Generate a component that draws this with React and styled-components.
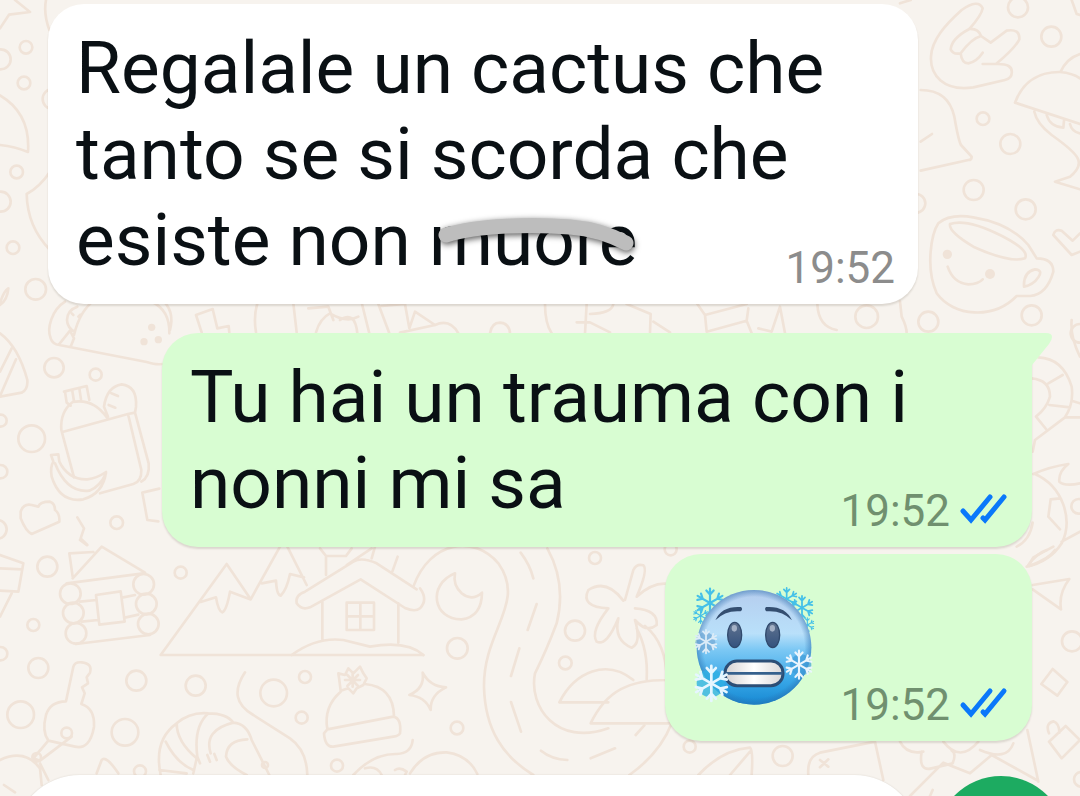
import React from 'react';
import styled, { createGlobalStyle } from 'styled-components';

const GlobalStyle = createGlobalStyle`
    * {
        box-sizing: border-box;
    }
    body {
        margin: 0;
        font-family: Roboto, 'Noto Sans', sans-serif;
        background: #f7f3ee;
    }
`;

const Screen = styled.div`
    position: relative;
    z-index: 0;
    height: 100vh;
    overflow: hidden;
    background: #f7f3ee;
`;

const WallpaperSvg = styled.svg`
    position: absolute;
    inset: 0;
    width: 100%;
    height: 100%;
    z-index: -1;
    fill: none;
    stroke: #f0e3d8;
    stroke-width: 8;
    stroke-linecap: round;
    stroke-linejoin: round;
`;

const Messages = styled.main`
    display: flex;
    flex-direction: column;
    padding: 4px 48px 0;
`;

const Bubble = styled.article`
    position: relative;
    display: ${(props) => (props.$emoji ? 'flex' : 'grid')};
    align-self: ${(props) => (props.$out ? 'flex-end' : 'flex-start')};
    max-width: calc(100% - 114px);
    margin-top: ${(props) => props.$gap || 0}px;
    border-radius: 36px;
    border-top-right-radius: ${(props) => (props.$tail ? 0 : 36)}px;
    background: ${(props) => (props.$out ? '#d8fdd2' : '#ffffff')};
    box-shadow: 0 2px 2px rgba(60, 40, 20, 0.14);
`;

const Tail = styled.svg`
    position: absolute;
    top: 0;
    left: 100%;
    width: 20px;
    height: 32px;
    fill: #d8fdd2;
`;

const Text = styled.p`
    grid-area: 1 / 1;
    margin: 0;
    padding: 21px 28px;
    font-size: 73px;
    line-height: 86px;
    color: #0a1014;
`;

const Meta = styled.div`
    grid-area: 1 / 1;
    place-self: end;
    display: flex;
    align-items: center;
    gap: 9px;
    padding: 0 23px 10px 0;
    font-size: 44px;
    line-height: 52px;
    color: ${(props) => (props.$out ? '#70906f' : '#8c8c8c')};
`;

const Ticks = styled.svg`
    width: 50px;
    height: 36px;
    fill: none;
    stroke: #0a78fa;
    stroke-width: 5;
    stroke-linecap: round;
`;

const Struck = styled.span`
    position: relative;
`;

const Stroke = styled.svg`
    position: absolute;
    top: 0;
    left: 0;
    width: 220px;
    height: 84px;
    fill: none;
    stroke: #bdbdbd;
    stroke-width: 15;
    stroke-linecap: round;
    filter: drop-shadow(1px 2px 3px rgba(0, 0, 0, 0.65));
`;

const Emoji = styled.svg`
    width: 124px;
    height: 124px;
    margin: 31px 24px 32px 27px;
`;

const Composer = styled.form`
    display: flex;
    align-items: center;
    gap: 16px;
    margin-top: 34px;
    padding: 0 14px;
`;

const MessageInput = styled.input`
    flex: 1;
    min-width: 0;
    height: 132px;
    padding: 0 66px;
    border: 0;
    border-radius: 66px;
    outline: 0;
    background: #ffffff;
    font: 54px Roboto, sans-serif;
    box-shadow: 0 0 2px rgba(60, 40, 20, 0.14);
`;

const SendButton = styled.button`
    width: 130px;
    height: 130px;
    padding: 0;
    border: 0;
    border-radius: 50%;
    background: #1dab61;
    color: #ffffff;
`;

const dots = [
    // left edge
    [78, 142, 19], [2, 178, 30], [72, 249, 19], [158, 297, 30], [50, 516, 19],
    [2, 605, 30], [39, 743, 19], [107, 868, 31], [162, 1103, 29], [287, 1124, 18],
    [2, 1262, 18], [95, 1316, 40], [2, 1415, 20], [350, 1568, 19], [-8, 1588, 28],
    // bottom left
    [142, 1700, 30], [542, 1718, 18], [100, 1875, 18], [2, 1961, 20],
    [115, 2004, 30], [409, 2042, 30], [587, 2057, 30], [821, 2079, 40],
    [915, 2031, 18], [905, 2153, 18], [62, 2144, 40], [375, 2197, 40],
    [1011, 2297, 18], [420, 2314, 18],
    // bottom middle
    [1372, 1945, 31], [1371, 2184, 19], [1785, 1674, 18], [1725, 1892, 30],
    [1696, 1989, 19], [2012, 1648, 18], [2348, 2268, 30], [2069, 2240, 18],
    // right edge
    [3054, 22, 30], [3154, 110, 30], [2949, 356, 19], [3031, 432, 30],
    [2921, 570, 30], [3077, 628, 30], [2748, 610, 28], [2785, 965, 30],
    [3095, 946, 30], [3240, 1000, 28], [3236, 1519, 22], [3216, 1924, 30],
    [2816, 1910, 19], [3244, 2338, 22],
    // between the bubbles
    [2600, 950, 34],
];

const logEnds = [
    [211, 161], [220, 219], [228, 280], [431, 133], [439, 192], [445, 252],
];

const Wallpaper = () => (
    <WallpaperSvg
        viewBox="0 0 3240 2388"
        preserveAspectRatio="xMinYMin slice"
        aria-hidden="true"
    >
        {dots.map(([x, y, r]) => (
            <circle key={`${x}-${y}`} cx={x} cy={y} r={r} />
        ))}

        {/* top left scraps */}
        <path d="M45 0L90 36L27 44L0 85M138 0Q130 40 148 90M0 286Q92 340 84 456Q45 440 0 435M150 515Q120 560 80 582Q82 680 150 750M0 910Q10 875 25 865Q22 900 0 915" />

        {/* taco, pizza, picnic bag and banana */}
        <g transform="translate(0 870)">
            <path d="M195 35C155 60 140 115 152 145Q158 163 178 165L440 216Q470 225 485 222M178 162L210 122L222 145L212 170M222 135Q240 60 285 30M232 50Q202 60 201 90Q202 115 225 125M215 70L220 75M235 80L241 74M455 35Q510 60 508 130M485 30Q525 60 510 120" />
            <path d="M0 130Q55 170 82 270Q84 300 65 308L0 320M0 245L35 175M0 318L48 208" />
            <path d="M192 305L260 288L268 330M195 305L200 338L212 347M217 303L222 334M238 295L243 328M218 336Q180 365 184 420L222 562M218 336Q280 325 320 382M190 425L384 372L424 540Q425 575 400 582L300 610M384 372L405 368L446 520Q450 560 424 575M312 350Q320 290 365 283Q412 288 408 350L405 368M312 350L324 380M334 310L354 318M326 345L346 353" />
            <path d="M153 495L175 493L178 515Q205 570 262 568Q290 565 318 546Q310 610 250 628Q180 640 155 560Q150 530 160 515ZM165 520Q200 610 268 602Q300 590 318 550" />
            <path d="M62 665Q70 640 95 645L115 650Q120 635 150 635Q165 640 165 660Q180 670 178 695L95 732Q78 725 62 685ZM232 682L252 715L242 745L262 765M478 596L427 608L442 690L475 694" />
            <path d="M588 75L638 57L652 115L686 108L688 127M588 75L605 127M772 40Q760 80 768 127M880 40L890 127M948 127Q960 85 990 70Q1040 100 1075 80M925 55L985 50L1000 90" />
            <g fill="#f0e3d8" stroke="none">
                <circle cx="455" cy="112" r="11" />
                <circle cx="432" cy="155" r="11" />
                <circle cx="475" cy="149" r="11" />
            </g>
        </g>

        {/* strip between the first two bubbles */}
        <g transform="translate(1020 870)">
            <path d="M0 90Q45 60 52 130M66 42L88 130M115 42L148 130M125 48L195 42L208 115L225 65L285 105L180 128M285 105Q330 85 355 130M450 130Q455 98 480 98Q508 100 510 130M615 42Q615 100 635 130M740 42L735 130M750 72Q815 70 820 42M710 97L750 97L810 127M860 42L932 72L930 127M940 95L990 127M1072 42L1095 75L1220 42M1095 75L1100 125L1220 92L1225 55M1220 92L1235 130M1255 115L1295 125L1320 50L1335 130M1432 42Q1435 110 1490 120" />
        </g>

        {/* crate and log cabin */}
        <g transform="translate(0 1620)">
            <path d="M0 45L70 70L55 155L0 152M0 85L66 88M35 160L0 230M240 0L260 15M208 40L280 36M208 40L218 110M218 115L305 20L435 98M200 130L430 100M240 185L290 180M245 245L295 240M288 165L362 154L374 245L298 254ZM370 172L405 165M378 232L415 224M228 312L450 285" />
            {logEnds.map(([x, y]) => (
                <circle key={`${x}-${y}`} cx={x} cy={y} r="31" />
            ))}

            {/* mountains and snowed-in house */}
            <path d="M1270 345H482L680 72L752 178L840 20M862 20L920 135M602 186L648 172Q655 215 667 217Q680 210 690 155L750 178M785 130L828 122Q830 165 842 167Q860 150 870 102L912 112" />
            <path d="M978 105V48L960 25M978 48H1038L1055 25M1040 75L1115 25M1125 20L1115 55M1193 50L1175 100M1260 145Q1285 180 1260 205Q1245 217 1215 204L1082 118L930 202Q905 212 890 190Q885 165 915 155L1060 65Q1085 50 1130 70L1250 148M967 185V298M1195 190V308M875 345Q950 290 1030 300L1110 320Q1220 300 1270 345M1040 188H1122V270H1040ZM1081 188V270M1040 229H1122" />

            {/* key, ring and shrimp */}
            <path d="M198 484L220 380Q225 365 245 367Q278 370 270 398L260 412L264 430L246 442L254 460L244 492Q285 505 282 560Q270 630 225 620L145 602Q125 575 138 525Q150 485 198 484ZM145 602L100 655L120 662L215 590" />
            <circle cx="200" cy="579" r="16" />
            <circle cx="110" cy="652" r="13" />
            <path d="M0 660Q75 625 120 685L125 735M120 670L145 720M12 735L45 757M290 700L305 660Q318 645 355 700" />
            <path d="M482 705Q460 600 530 550Q570 515 625 520Q680 520 700 548Q740 550 755 600L808 705M700 548Q610 570 632 640M625 520Q580 560 592 650L600 670M530 550Q530 605 590 655M497 605Q530 670 580 690M478 690L560 700M590 655L580 700M742 598Q680 600 678 650Q690 680 740 705M622 645L630 665M643 642L650 660" />
            <circle cx="795" cy="675" r="9" />
            <path d="M735 397Q680 480 760 525L870 595Q920 630 922 705" />

            {/* woolly hat */}
            <path d="M1022 455Q970 500 982 568L1180 530Q1205 535 1200 580Q1195 588 1180 590L1000 620Q975 622 972 580L982 568M1095 432Q1180 440 1182 528M1018 420L1015 400L1035 405L1045 385L1060 400L1080 380L1090 400L1100 415L1090 435L1070 445L1060 460L1045 445L1022 452ZM1035 420H1080M1058 400V440M1042 405L1074 438M1074 405L1042 438" />
        </g>

        {/* moon, star, road and palm island */}
        <g transform="translate(1020 1620)">
            <path d="M345 100C260 135 280 240 365 238Q425 230 426 158Q395 185 365 160Q338 135 345 100Z" />
            <path d="M248 398Q270 440 318 442Q270 465 272 510Q255 470 208 465Q255 445 248 398Z" />
            <path d="M220 140C270 0 405 -15 475 70C560 190 430 270 432 440C435 570 490 650 580 705M622 25Q680 130 650 250Q620 330 585 400C565 500 650 620 805 565M868 705Q960 640 995 550M542 38Q570 75 580 115M590 192L563 270M538 325L513 408M513 486L543 575M603 632Q635 658 682 660M752 655L825 625M887 585L913 556" />
            <path d="M855 180L880 90Q890 70 910 76Q925 90 890 170Q940 125 985 132M850 182Q800 115 745 150Q720 200 805 205M805 205Q750 275 770 305Q800 320 835 235Q820 300 875 323Q905 310 885 240Q920 280 950 255Q955 210 885 205M890 265Q925 330 920 418M915 258Q980 310 980 420M658 487H805M658 487C705 395 800 355 880 420M752 550H1000M752 550C800 450 870 420 980 420" />
            <path d="M40 705Q100 640 170 642Q215 640 218 600M210 700Q250 635 320 637Q385 645 412 702M75 685Q110 675 125 705M165 690Q180 680 200 695L195 705" />
        </g>

        {/* hand, bell, hat and smiling mug */}
        <g transform="translate(2700 0)">
            <path d="M185 30Q235 -5 248 25Q245 45 208 87Q235 85 243 108L272 128L320 92Q360 85 358 118Q345 145 288 192Q340 190 335 220Q335 235 315 240L220 262C130 275 90 225 93 170C95 120 135 75 185 30ZM208 87Q155 115 152 148Q160 165 182 160Q215 115 243 108M182 160Q185 190 205 190Q230 185 248 158M288 192H248M0 10L32 0" />
            <path d="M62 270Q145 270 163 350Q175 420 183 435L215 470Q215 480 205 480L62 512M62 425L96 402" />
            <path d="M345 308Q380 215 480 216Q520 220 540 235M345 308L540 372M482 215Q500 175 540 162M403 335Q410 370 455 405C540 465 560 490 510 530L465 545L540 568M440 345Q450 380 490 383L492 362M510 372Q515 395 540 400M515 0L530 42L540 45" />
            <path d="M115 670Q150 640 220 652Q330 670 385 735L410 775Q460 775 460 815Q440 885 390 888H350C280 960 160 950 110 880C75 800 95 700 115 670ZM150 672Q200 655 300 705Q390 750 375 775Q330 790 220 740Q145 695 150 672ZM372 860Q370 815 405 808Q430 810 415 832Q400 855 372 860ZM143 800Q160 850 205 853Q235 852 248 838" />
            <path d="M460 705Q465 685 485 692L518 722L540 700M460 705L515 765L540 755M0 905L5 950Q20 980 20 1000" />
            <g fill="#f0e3d8" stroke="none">
                <circle cx="142" cy="763" r="14" />
                <circle cx="270" cy="822" r="15" />
            </g>
        </g>

        {/* donut, fish and football beside the outgoing bubbles */}
        <g transform="translate(3030 960)">
            <path d="M85 112Q160 115 185 200Q192 250 165 292L75 360L68 395M65 175Q120 180 120 230Q110 265 78 290M115 190L158 165M118 255L180 262M78 290L108 327M165 292H210M185 242L210 250M185 0Q180 50 210 110" />
            <path d="M70 462Q120 440 175 432Q145 455 148 485Q165 500 210 490M75 462C160 500 190 600 155 670Q120 725 50 740M122 538L150 535M122 538L115 590L150 628M155 665L210 635M68 608Q60 660 20 680M70 712L130 680M70 712L55 738" />
        </g>
        <g transform="translate(2700 1650)">
            <path d="M385 45Q410 10 440 0M388 48Q450 25 465 0M398 105L508 87Q475 130 483 178L398 118M458 357L502 396L472 437L424 402ZM447 575L497 528L540 570L485 625ZM447 550Q435 520 460 514Q478 520 478 548M382 540L415 695M0 575Q20 615 70 605M65 605Q55 665 95 655L158 640Q170 610 155 602M130 575Q180 640 235 575M240 600Q320 635 340 580M30 738L130 638L210 670L275 615L410 690M90 738L98 720" />
            <path d="M-605 675Q-535 600 -450 593Q-440 600 -445 675M-510 675L-450 605M-275 675Q-280 620 -240 608L-75 575L-50 690M-240 630L-215 650M-215 628L-240 652" />
        </g>
    </WallpaperSvg>
);

const ReadTicks = () => (
    <Ticks viewBox="0 0 50 36" role="img" aria-label="Letto">
        <path d="M4 18L12 27L31 4M24 25L26 27L45 4" />
    </Ticks>
);

const Flake = ({ x, y, r, color }) => (
    <g
        transform={`translate(${x} ${y}) scale(${r / 40})`}
        stroke={color}
        strokeWidth="6"
        strokeLinecap="round"
        fill="none"
    >
        {[0, 60, 120, 180, 240, 300].map((angle) => (
            <path
                key={angle}
                transform={`rotate(${angle})`}
                d="M0 0V-39M-10 -34L0 -23L10 -34"
            />
        ))}
    </g>
);

const FreezingFace = () => (
    <Emoji viewBox="24 30 372 372" role="img" aria-label="Faccina congelata">
        <defs>
            <linearGradient id="ice" x1="0" y1="0" x2="0" y2="1">
                <stop offset="0" stopColor="#b5cdee" />
                <stop offset="0.38" stopColor="#b9e0fa" />
                <stop offset="0.52" stopColor="#7cc8f4" />
                <stop offset="0.8" stopColor="#36a5e6" />
                <stop offset="1" stopColor="#1688d2" />
            </linearGradient>
            <radialGradient id="rim">
                <stop offset="0.88" stopColor="#2a6cac" stopOpacity="0" />
                <stop offset="1" stopColor="#2a6cac" stopOpacity="0.5" />
            </radialGradient>
            <linearGradient id="eye" x1="0" y1="0" x2="0" y2="1">
                <stop offset="0" stopColor="#60738f" />
                <stop offset="1" stopColor="#34527e" />
            </linearGradient>
            <linearGradient id="teeth" x1="0" y1="0" x2="1" y2="0">
                <stop offset="0" stopColor="#d5d2d2" />
                <stop offset="0.5" stopColor="#ffffff" />
                <stop offset="1" stopColor="#d9d7d8" />
            </linearGradient>
        </defs>
        <Flake x={78} y={84} r={44} color="#45c1e8" />
        <Flake x={50} y={122} r={24} color="#45c1e8" />
        <Flake x={308} y={72} r={34} color="#45c1e8" />
        <Flake x={354} y={98} r={36} color="#45c1e8" />
        <Flake x={370} y={150} r={22} color="#45c1e8" />
        <circle cx="210" cy="217" r="172" fill="url(#ice)" />
        <circle cx="210" cy="217" r="172" fill="url(#rim)" />
        <path
            d="M94 136Q113 92 171 96Q178 103 170 109Q124 105 94 136ZM324 136Q304 92 246 96Q240 103 247 109Q294 105 324 136Z"
            fill="#344e70"
        />
        <g fill="url(#eye)" stroke="#30496c" strokeWidth="4">
            <ellipse cx="152" cy="180" rx="21" ry="38" />
            <ellipse cx="266" cy="180" rx="21" ry="38" />
        </g>
        <ellipse cx="151" cy="160" rx="8" ry="10" fill="#a3b0c5" />
        <ellipse cx="265" cy="160" rx="8" ry="10" fill="#a3b0c5" />
        <rect
            x="123"
            y="258"
            width="174"
            height="74"
            rx="36"
            fill="url(#teeth)"
            stroke="#2c4e76"
            strokeWidth="9"
        />
        <path d="M124 295H296" stroke="#35608d" strokeWidth="8" />
        <circle cx="80" cy="325" r="42" fill="#2fb0e3" opacity="0.8" />
        <circle cx="64" cy="202" r="30" fill="#6fa6d4" opacity="0.7" />
        <circle cx="350" cy="270" r="32" fill="#3f9bd8" opacity="0.7" />
        <Flake x={66} y={200} r={36} color="#dcecf8" />
        <Flake x={82} y={325} r={54} color="#e6f6ff" />
        <Flake x={345} y={269} r={43} color="#eaf5fd" />
    </Emoji>
);

const App = () => (
    <Screen>
        <GlobalStyle />
        <Wallpaper />
        <Messages>
            <Bubble>
                <Text>
                    Regalale un cactus che tanto se si scorda che esiste non{' '}
                    <Struck>
                        muore
                        <Stroke viewBox="0 0 220 84" aria-hidden="true">
                            <path d="M17 38C50 28 105 27 141 30C165 32 182 38 197 46" />
                        </Stroke>
                    </Struck>
                </Text>
                <Meta>
                    <time>19:52</time>
                </Meta>
            </Bubble>
            <Bubble $out $tail $gap={29}>
                <Tail viewBox="0 0 20 32" aria-hidden="true">
                    <path d="M0 0H14Q20 0 20 4Q20 7 17 11L0 32Z" />
                </Tail>
                <Text>Tu hai un trauma con i nonni mi sa</Text>
                <Meta $out>
                    <time>19:52</time>
                    <ReadTicks />
                </Meta>
            </Bubble>
            <Bubble $out $emoji $gap={7}>
                <FreezingFace />
                <Meta $out>
                    <time>19:52</time>
                    <ReadTicks />
                </Meta>
            </Bubble>
        </Messages>
        <Composer onSubmit={(e) => e.preventDefault()}>
            <MessageInput type="text" aria-label="Messaggio" />
            <SendButton type="submit" aria-label="Invia" />
        </Composer>
    </Screen>
);

export default App;
